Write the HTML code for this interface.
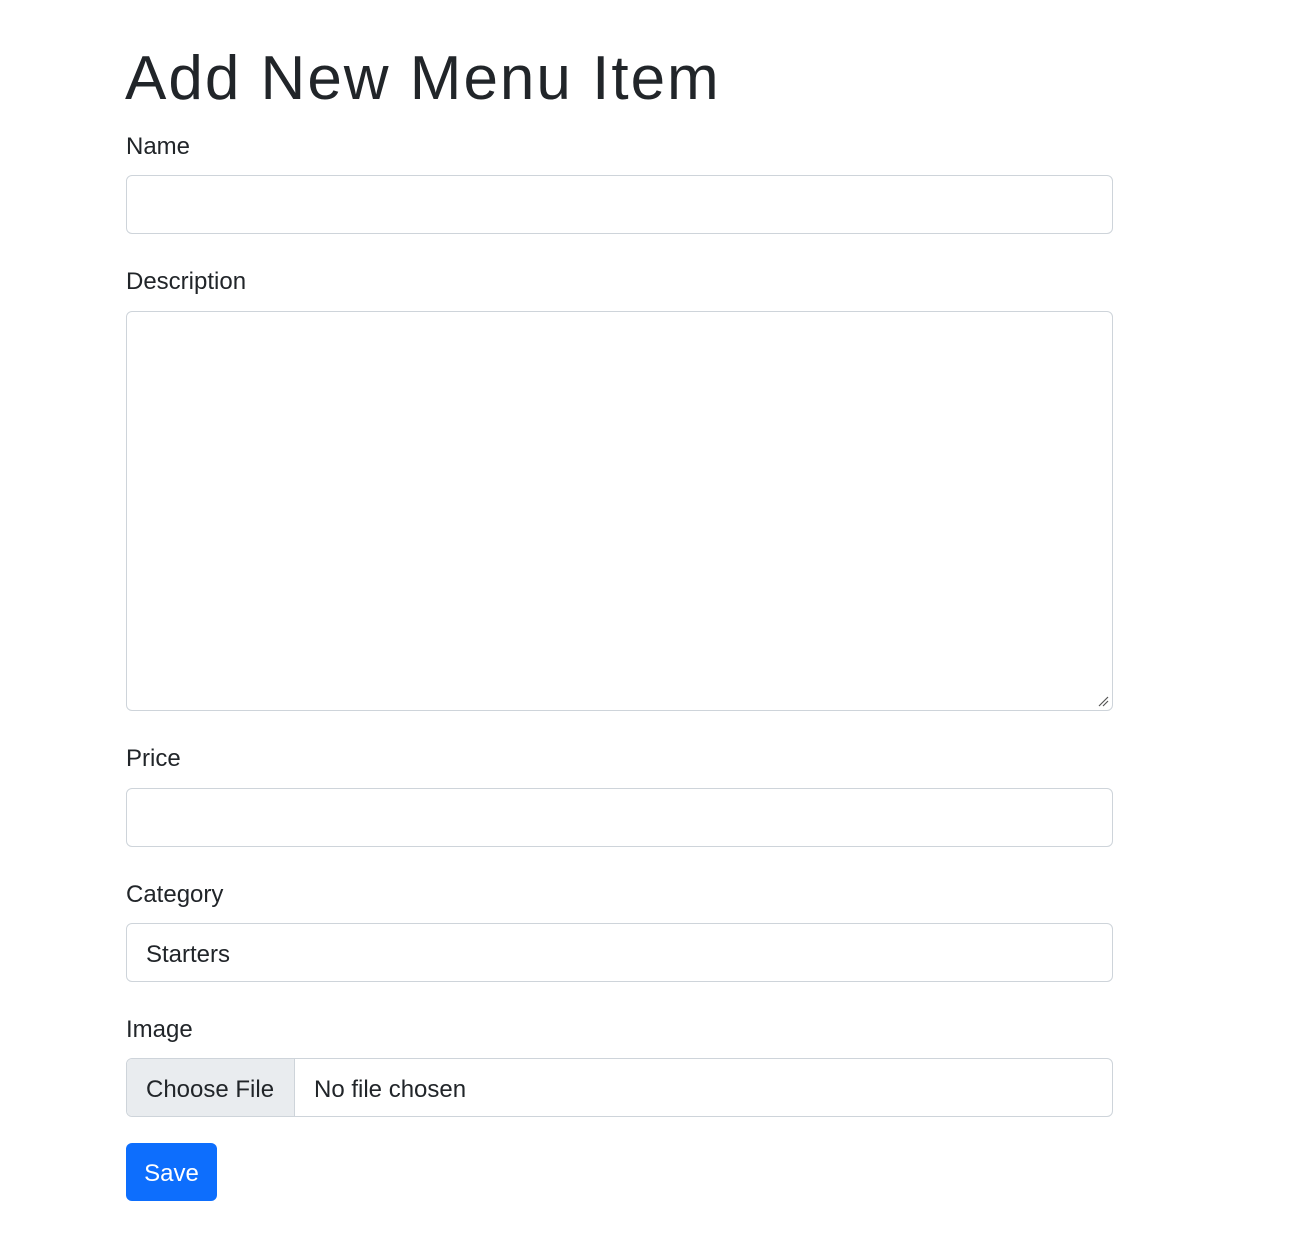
<!DOCTYPE html>
<html><head><meta charset="utf-8"><style>
html,body{margin:0;padding:0;background:#fff;width:1297px;height:1249px;overflow:hidden}
body{font-family:"Liberation Sans",sans-serif;color:#212529;position:relative}
.a{position:absolute}
h1{position:absolute;left:125px;top:39px;margin:0;font-size:62px;font-weight:500;line-height:80px;letter-spacing:2px}
.lbl{position:absolute;left:126px;font-size:24px;line-height:30px}
.in{position:absolute;left:126px;width:985px;border:1.5px solid #ced4da;border-radius:6px;background:#fff}
.txt{font-size:24px;line-height:30px}
</style></head><body>
<h1>Add New Menu Item</h1>
<div class="lbl" style="top:132px">Name</div>
<div class="in" style="top:175px;height:57px"></div>
<div class="lbl" style="top:267px">Description</div>
<div class="in" style="top:311px;height:398px">
<svg class="a" style="right:3px;bottom:3px" width="12" height="12"><path d="M2 11L11 2M6 11L11 6" stroke="#555" stroke-width="1.2"/></svg>
</div>
<div class="lbl" style="top:744px">Price</div>
<div class="in" style="top:788px;height:57px"></div>
<div class="lbl" style="top:880px">Category</div>
<div class="in" style="top:923px;height:57px"><span class="a txt" style="left:19px;top:16px">Starters</span></div>
<div class="lbl" style="top:1015px">Image</div>
<div class="in" style="top:1058px;height:57px;overflow:hidden">
<div class="a" style="left:0;top:0;width:167px;height:57px;background:#e9ecef;border-right:1.5px solid #ced4da"></div>
<span class="a txt" style="left:19px;top:16px">Choose File</span>
<span class="a txt" style="left:187px;top:16px">No file chosen</span>
</div>
<div class="a" style="left:126px;top:1143px;width:91px;height:58px;background:#0d6efd;border-radius:6px;color:#fff;font-size:24px;line-height:62px;text-align:center">Save</div>
</body></html>
